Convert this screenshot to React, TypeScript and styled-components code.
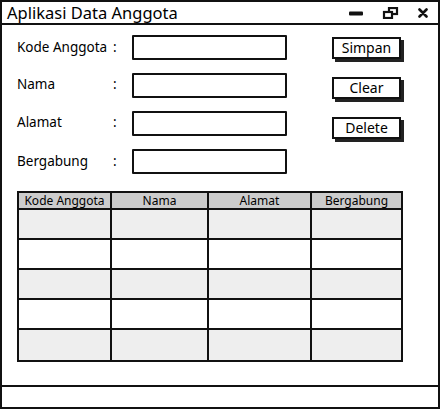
import React from 'react';
import styled, { createGlobalStyle } from 'styled-components';

const GlobalStyle = createGlobalStyle`
  html, body {
    margin: 0;
    padding: 0;
    background: #ffffff;
  }
  body {
    font-family: 'Noto Sans', 'Liberation Sans', sans-serif;
    color: #000;
  }
  * {
    box-sizing: border-box;
  }
`;

const Window = styled.div`
  width: 440px;
  height: 409px;
  border: 2px solid #111;
  display: flex;
  flex-direction: column;
  background: #fff;
`;

const TitleBar = styled.div`
  height: 23px;
  border-bottom: 2px solid #111;
  display: flex;
  align-items: center;
  padding: 1px 0 0 5px;
`;

const Title = styled.div`
  flex: 1;
  font-size: 16.5px;
  line-height: 20px;
`;

const Controls = styled.div`
  display: flex;
  align-items: center;
`;

const ControlButton = styled.div<{ $w: number }>`
  width: ${p => p.$w}px;
  height: 20px;
  display: flex;
  align-items: center;
  justify-content: center;
`;

const Body = styled.div`
  flex: 1;
  padding: 10px 0 0 15px;
  display: flex;
  flex-direction: column;
`;

const Top = styled.div`
  display: flex;
  gap: 45px;
`;

const Form = styled.div`
  display: flex;
  flex-direction: column;
  gap: 13px;
`;

const FormRow = styled.div`
  display: flex;
  align-items: center;
  height: 25px;
`;

const Label = styled.div<{ $dy?: number }>`
  width: 96px;
  font-size: 13.5px;
  transform: translateY(${p => p.$dy ?? 0}px);
`;

const Colon = styled.div<{ $dy?: number }>`
  width: 19px;
  font-size: 13.5px;
  transform: translateY(${p => p.$dy ?? 0}px);
`;

const Input = styled.div`
  width: 155px;
  height: 25px;
  border: 2px solid #111;
  border-radius: 1px;
  background: #fff;
`;

const Buttons = styled.div`
  display: flex;
  flex-direction: column;
  gap: 18px;
  padding-top: 2px;
`;

const Button = styled.div`
  width: 69px;
  height: 22px;
  border: 2px solid #111;
  background: #fff;
  box-shadow: 3px 3px 0 #222;
  font-size: 14px;
  display: flex;
  align-items: center;
  justify-content: center;
  line-height: 1;
`;

const Table = styled.div`
  margin-top: 17px;
  width: 386px;
  border: 2px solid #111;
  display: grid;
  grid-template-columns: 93px 97px 103px 89px;
`;

const HeadCell = styled.div<{ $last?: boolean }>`
  height: 17px;
  background: #cccccc;
  border-right: ${p => (p.$last ? 'none' : '2px solid #111')};
  border-bottom: 2px solid #111;
  font-size: 12px;
  line-height: 15px;
  text-align: center;
  white-space: nowrap;
  overflow: hidden;
`;

const Cell = styled.div<{ $shade: boolean; $last?: boolean; $bottom?: boolean }>`
  height: 30px;
  background: ${p => (p.$shade ? '#eeeeee' : '#ffffff')};
  border-right: ${p => (p.$last ? 'none' : '2px solid #111')};
  border-bottom: ${p => (p.$bottom ? 'none' : '2px solid #111')};
`;

const StatusBar = styled.div`
  height: 22px;
  border-top: 2px solid #111;
`;

const fields = [
  { label: 'Kode Anggota', dy: -1 },
  { label: 'Nama', dy: -2 },
  { label: 'Alamat', dy: -2 },
  { label: 'Bergabung', dy: -1 },
];

const columns = ['Kode Anggota', 'Nama', 'Alamat', 'Bergabung'];
const rows = [0, 1, 2, 3, 4];

const App = () => {
  return (
    <>
      <GlobalStyle />
      <Window>
        <TitleBar>
          <Title>Aplikasi Data Anggota</Title>
          <Controls>
            <ControlButton $w={32}>
              <svg width="15" height="5" viewBox="0 0 15 5">
                <rect x="0" y="0.5" width="14" height="4" rx="1" fill="#111" />
              </svg>
            </ControlButton>
            <ControlButton $w={36}>
              <svg width="17" height="12" viewBox="0 0 17 12">
                <rect x="7" y="1" width="8" height="6" fill="none" stroke="#111" strokeWidth="2.2" />
                <rect x="2" y="5" width="8" height="6" fill="#fff" stroke="#111" strokeWidth="2.2" />
              </svg>
            </ControlButton>
            <ControlButton $w={30}>
              <svg width="10" height="10" viewBox="0 0 10 10">
                <path d="M1.5 1.5 L8.5 8.5 M8.5 1.5 L1.5 8.5" stroke="#111" strokeWidth="2.6" strokeLinecap="round" />
              </svg>
            </ControlButton>
          </Controls>
        </TitleBar>
        <Body>
          <Top>
            <Form>
              {fields.map(f => (
                <FormRow key={f.label}>
                  <Label $dy={f.dy}>{f.label}</Label>
                  <Colon $dy={f.dy}>:</Colon>
                  <Input />
                </FormRow>
              ))}
            </Form>
            <Buttons>
              <Button>Simpan</Button>
              <Button>Clear</Button>
              <Button>Delete</Button>
            </Buttons>
          </Top>
          <Table>
            {columns.map((c, i) => (
              <HeadCell key={c} $last={i === columns.length - 1}>
                {c}
              </HeadCell>
            ))}
            {rows.map(r =>
              columns.map((c, i) => (
                <Cell
                  key={`${r}-${c}`}
                  $shade={r % 2 === 0}
                  $last={i === columns.length - 1}
                  $bottom={r === rows.length - 1}
                />
              ))
            )}
          </Table>
        </Body>
        <StatusBar />
      </Window>
    </>
  );
};

export default App;
